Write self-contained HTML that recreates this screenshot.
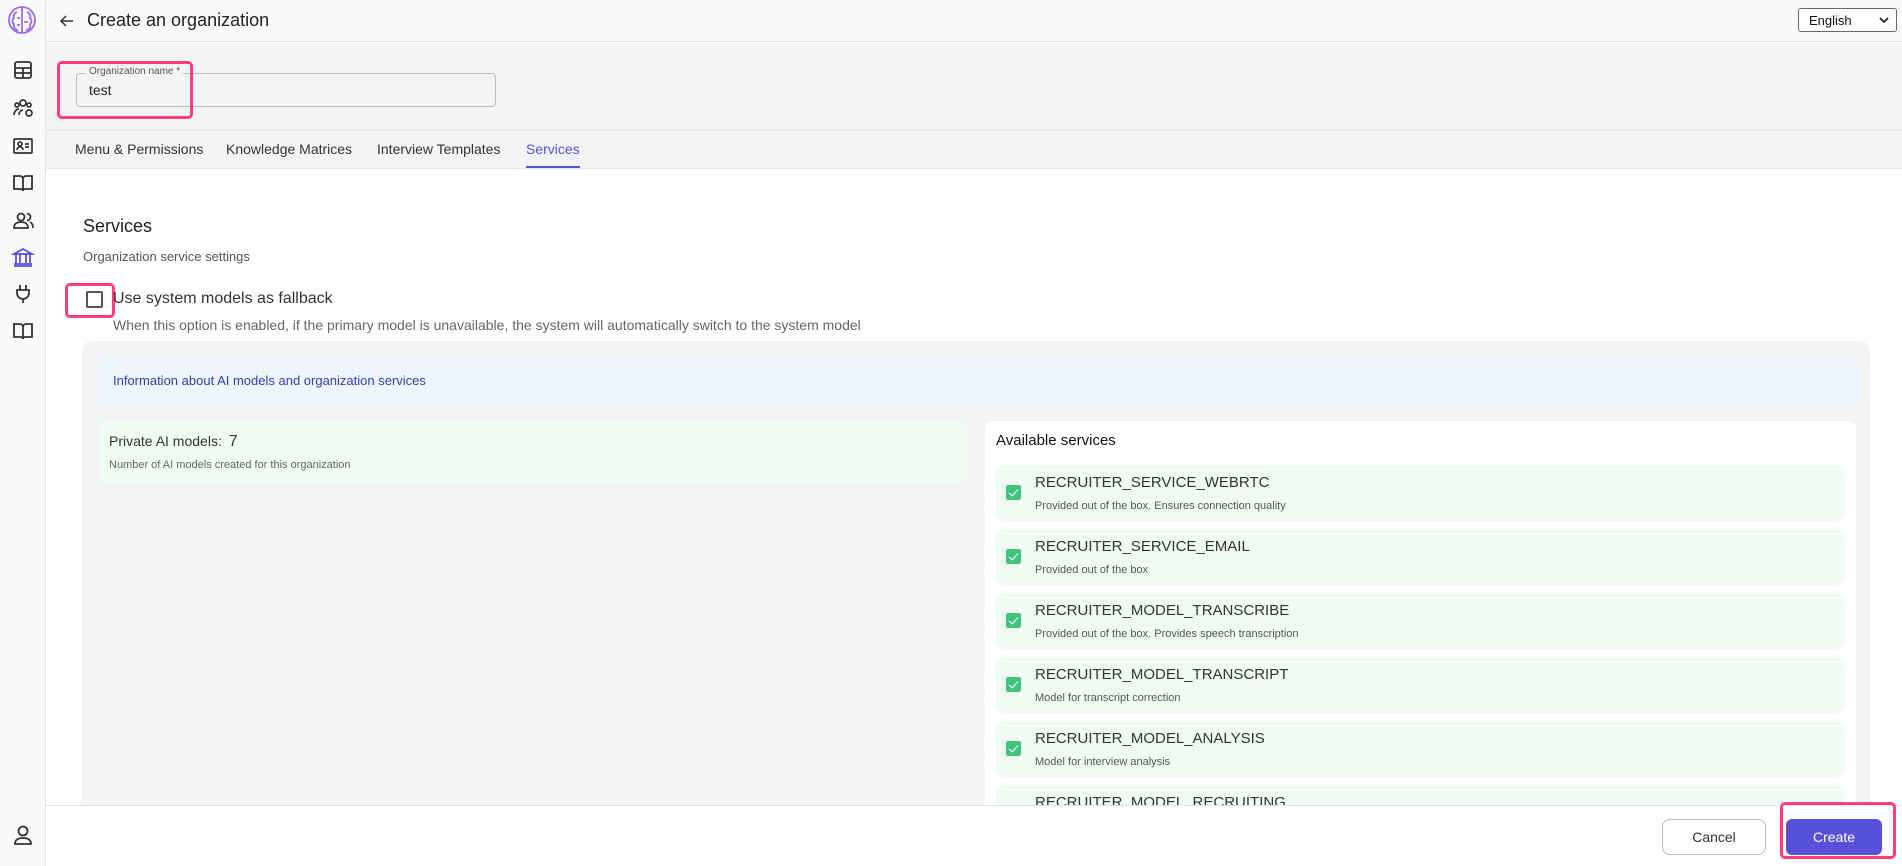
<!DOCTYPE html>
<html><head><meta charset="utf-8"><style>
*{box-sizing:border-box;margin:0;padding:0}
body{width:1902px;height:866px;overflow:hidden;font-family:"Liberation Sans",sans-serif;background:#fff;position:relative;color:#222}
.abs{position:absolute}
.side{left:0;top:0;width:46px;height:866px;background:#fafafa;border-right:1px solid #e3e3e3}
.ico{position:absolute;left:11px;width:24px;height:24px}
.hdr{left:46px;top:0;right:0;height:42px;background:#fafafa;border-bottom:1px solid #ddd}
.gray{left:46px;top:43px;right:0;height:126px;background:#f3f4f6;border-bottom:1px solid #e5e7eb}
.pink{border:3px solid #ff3d7f;border-radius:5px}
.tab{top:141px;font-size:14px;color:#333}
.svc{left:996px;width:848px;height:56px;background:#effcf3;border-radius:8px}
.svc .cb{position:absolute;left:10px;top:20px;width:15px;height:15px;background:#3fc37d;border-radius:2px}
.svc .cb:after{content:"";position:absolute;left:5px;top:2px;width:4px;height:8px;border:solid #fff;border-width:0 1.5px 1.5px 0;transform:rotate(40deg)}
.svc .t{position:absolute;left:39px;top:9px;font-size:15px;color:#333}
.svc .d{position:absolute;left:39px;top:35px;font-size:11px;color:#555}
</style></head><body>
<div class="abs side">
<svg class="abs" style="left:6px;top:4px" width="32" height="32" viewBox="0 0 32 32" fill="none" stroke="#9b6cf0" stroke-width="1.8"><circle cx="16" cy="16" r="13"/><path d="M16 4v24M11 8c-3 1-4 4-3 6-2 1-2 5 0 6-1 3 1 6 4 6M21 8c3 1 4 4 3 6 2 1 2 5 0 6 1 3-1 6-4 6M11 14h3M18 18h4M11 21h3"/></svg>
<svg class="ico" style="top:58px" viewBox="0 0 24 24" fill="none" stroke="#333" stroke-width="1.8"><rect x="4" y="4" width="16" height="16" rx="2"/><path d="M4 10h16M4 15h16M12 10v10"/></svg>
<svg class="ico" style="top:96px" viewBox="0 0 24 24" fill="none" stroke="#333" stroke-width="1.7"><circle cx="12" cy="7" r="3"/><circle cx="6" cy="9" r="2"/><circle cx="18" cy="9" r="2"/><path d="M3 19c0-3 2-6 5-6M8 19c0-3 2-5 4-5"/><circle cx="18" cy="17" r="3"/></svg>
<svg class="ico" style="top:134px" viewBox="0 0 24 24" fill="none" stroke="#333" stroke-width="1.7"><rect x="3" y="5" width="18" height="14" rx="1"/><circle cx="9" cy="10" r="2"/><path d="M6 16c0-2 1.5-3 3-3s3 1 3 3M14 10h4M14 13h4"/></svg>
<svg class="ico" style="top:171px" viewBox="0 0 24 24" fill="none" stroke="#333" stroke-width="1.8"><path d="M3 5h6a3 3 0 0 1 3 3v12a2 2 0 0 0-2-2H3zM21 5h-6a3 3 0 0 0-3 3v12a2 2 0 0 1 2-2h7z"/></svg>
<svg class="ico" style="top:209px" viewBox="0 0 24 24" fill="none" stroke="#333" stroke-width="1.8"><circle cx="10" cy="8" r="3.5"/><path d="M3 19c0-4 3-6 7-6s7 2 7 6zM16 4.5a3.5 3.5 0 0 1 0 7M19 13c2 1 3 3 3 6"/></svg>
<svg class="ico" style="top:245px" viewBox="0 0 24 24" fill="none" stroke="#5b4fe0" stroke-width="1.8"><path d="M3 9l9-5 9 5zM5 9v9M9 9v9M15 9v9M19 9v9M3 19h18M3 21h18"/></svg>
<svg class="ico" style="top:282px" viewBox="0 0 24 24" fill="none" stroke="#333" stroke-width="1.8"><path d="M9 3v5M15 3v5M6 8h12v3a6 6 0 0 1-12 0zM12 17v4"/></svg>
<svg class="ico" style="top:319px" viewBox="0 0 24 24" fill="none" stroke="#333" stroke-width="1.8"><path d="M3 5h6a3 3 0 0 1 3 3v12a2 2 0 0 0-2-2H3zM21 5h-6a3 3 0 0 0-3 3v12a2 2 0 0 1 2-2h7z"/></svg>
<svg class="ico" style="top:823px" viewBox="0 0 24 24" fill="none" stroke="#333" stroke-width="1.8"><circle cx="12" cy="8" r="4.5"/><path d="M4 21c0-4 3-6 8-6s8 2 8 6z"/></svg>
</div>
<div class="abs hdr"></div>
<svg class="abs" style="left:59px;top:13px" width="16" height="16" viewBox="0 0 16 16" fill="none" stroke="#333" stroke-width="1.5"><path d="M14 8H2M7 3L2 8l5 5"/></svg>
<div class="abs" style="left:87px;top:10px;font-size:18px;color:#222">Create an organization</div>
<div class="abs" style="left:1798px;top:8px;width:99px;height:24px;border:1px solid #666;border-radius:3px;background:#fff;font-size:13px;padding:4px 0 0 10px;color:#111">English<svg class="abs" style="right:7px;top:8px" width="10" height="7" viewBox="0 0 10 7" fill="none" stroke="#222" stroke-width="1.8"><path d="M1 1l4 4 4-4"/></svg></div>
<div class="abs gray"></div>
<div class="abs" style="left:76px;top:73px;width:420px;height:34px;border:1px solid #bbb;border-radius:4px"></div>
<div class="abs" style="left:86px;top:66px;font-size:10px;color:#555;background:#f3f4f6;padding:0 3px">Organization name *</div>
<div class="abs" style="left:89px;top:82px;font-size:14px;color:#222">test</div>
<div class="abs pink" style="left:57px;top:61px;width:136px;height:58px"></div>
<div class="abs" style="left:46px;top:130px;right:0;border-top:1px solid #e5e7eb"></div>
<div class="abs tab" style="left:75px">Menu &amp; Permissions</div>
<div class="abs tab" style="left:226px">Knowledge Matrices</div>
<div class="abs tab" style="left:377px">Interview Templates</div>
<div class="abs tab" style="left:526px;color:#5b4fe0">Services</div>
<div class="abs" style="left:526px;top:166px;width:54px;height:2px;background:#5b4fe0"></div>
<div class="abs" style="left:83px;top:216px;font-size:18px;color:#222">Services</div>
<div class="abs" style="left:83px;top:249px;font-size:13px;color:#555">Organization service settings</div>
<div class="abs" style="left:86px;top:291px;width:17px;height:17px;border:2px solid #555;border-radius:2px"></div>
<div class="abs pink" style="left:65px;top:283px;width:50px;height:35px"></div>
<div class="abs" style="left:113px;top:290px;font-size:16px;color:#333">Use system models as fallback</div>
<div class="abs" style="left:113px;top:317px;font-size:14px;color:#666">When this option is enabled, if the primary model is unavailable, the system will automatically switch to the system model</div>
<div class="abs" style="left:82px;top:341px;width:1788px;height:500px;background:#f3f4f6;border-radius:10px"></div>
<div class="abs" style="left:99px;top:357px;width:1759px;height:48px;background:#eef5fe;border-radius:8px"></div>
<div class="abs" style="left:113px;top:373px;font-size:13px;color:#2f3fb5">Information about AI models and organization services</div>
<div class="abs" style="left:99px;top:421px;width:868px;height:62px;background:#effcf3;border-radius:8px"></div>
<div class="abs" style="left:109px;top:433px;font-size:14px;color:#333">Private AI models: <span style="font-size:16px;margin-left:3px">7</span></div>
<div class="abs" style="left:109px;top:459px;font-size:11px;color:#666">Number of AI models created for this organization</div>
<div class="abs" style="left:985px;top:421px;width:871px;height:420px;background:#fff;border-radius:8px"></div>
<div class="abs" style="left:996px;top:432px;font-size:15px;color:#111">Available services</div>
<div class="abs svc" style="top:465px"><div class="cb"></div><div class="t">RECRUITER_SERVICE_WEBRTC</div><div class="d">Provided out of the box. Ensures connection quality</div></div>
<div class="abs svc" style="top:529px"><div class="cb"></div><div class="t">RECRUITER_SERVICE_EMAIL</div><div class="d">Provided out of the box</div></div>
<div class="abs svc" style="top:593px"><div class="cb"></div><div class="t">RECRUITER_MODEL_TRANSCRIBE</div><div class="d">Provided out of the box. Provides speech transcription</div></div>
<div class="abs svc" style="top:657px"><div class="cb"></div><div class="t">RECRUITER_MODEL_TRANSCRIPT</div><div class="d">Model for transcript correction</div></div>
<div class="abs svc" style="top:721px"><div class="cb"></div><div class="t">RECRUITER_MODEL_ANALYSIS</div><div class="d">Model for interview analysis</div></div>
<div class="abs svc" style="top:785px"><div class="cb"></div><div class="t">RECRUITER_MODEL_RECRUITING</div></div>
<div class="abs" style="left:46px;top:805px;right:0;bottom:0;background:#fff;border-top:1px solid #e3e3e3"></div>
<div class="abs" style="left:1662px;top:819px;width:104px;height:36px;border:1px solid #bbb;border-radius:8px;font-size:14px;text-align:center;line-height:34px;color:#333;background:#fff">Cancel</div>
<div class="abs" style="left:1786px;top:819px;width:96px;height:36px;border-radius:6px;background:#5850d8;color:#fff;font-size:14px;text-align:center;line-height:36px">Create</div>
<div class="abs pink" style="left:1780px;top:802px;width:116px;height:57px"></div>
</body></html>
